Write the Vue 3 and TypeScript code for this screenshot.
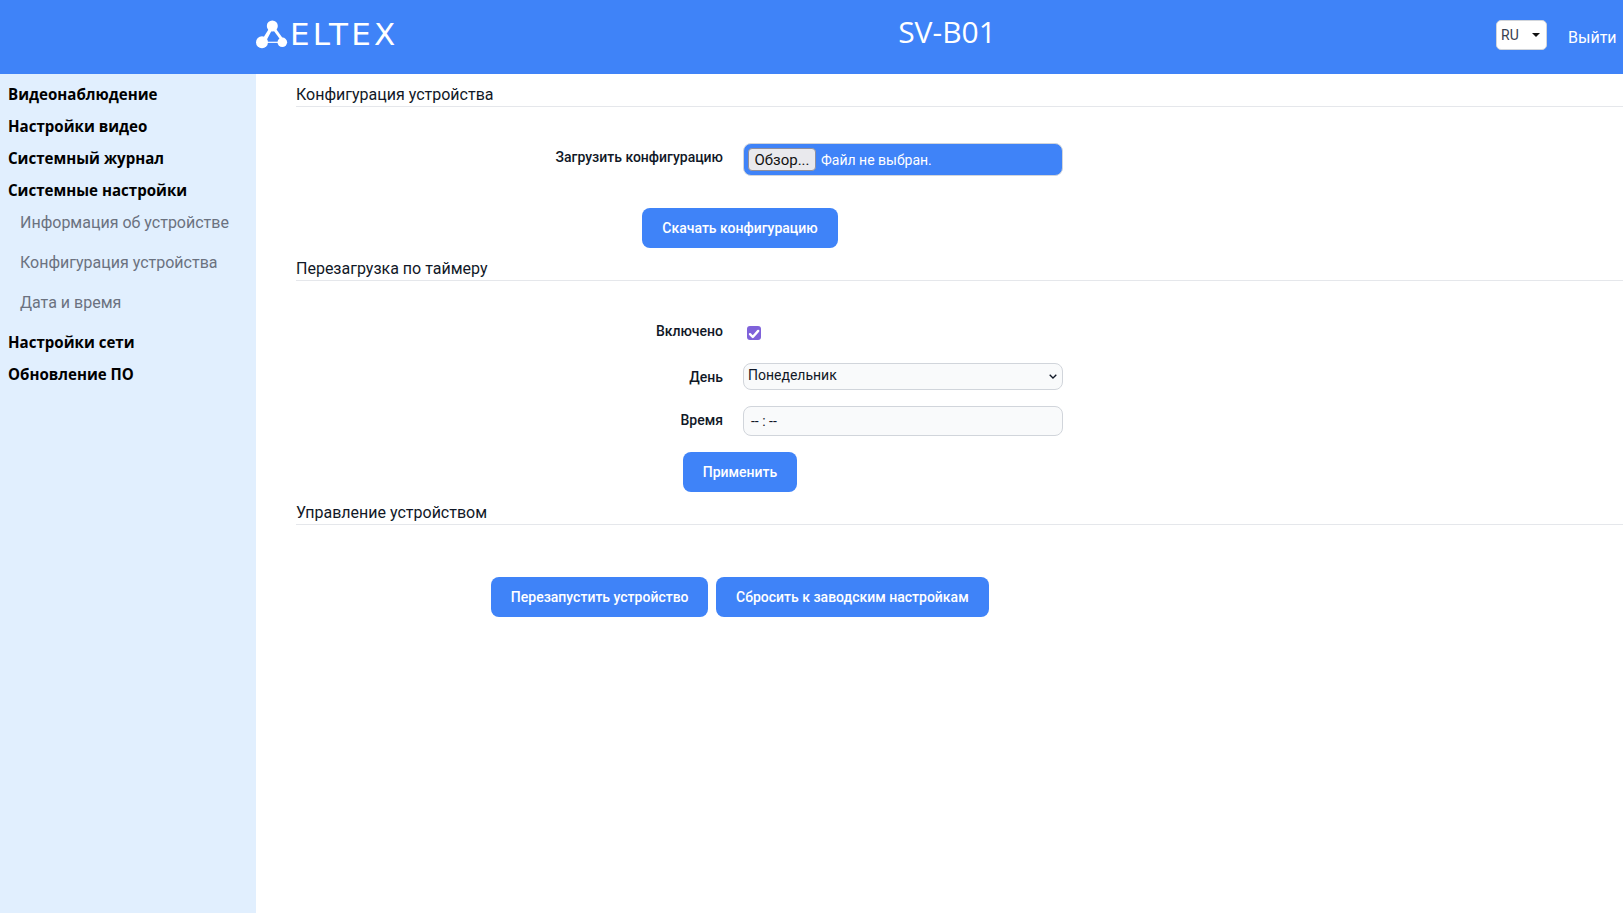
<script setup lang="ts">
const menuTop: string[] = ['Видеонаблюдение', 'Настройки видео', 'Системный журнал', 'Системные настройки']
const subItems: string[] = ['Информация об устройстве', 'Конфигурация устройства', 'Дата и время']
const menuBottom: string[] = ['Настройки сети', 'Обновление ПО']
</script>

<template>
  <div class="page">
    <header class="header">
      <div class="logo">
        <svg class="logo-mark" viewBox="0 0 34 30" width="34" height="30" aria-hidden="true">
          <path d="M14 8 L4 24 L8 26 L16 11 Z" fill="#fff" />
          <path d="M15 8 L26 23 L28 21 L18 7 Z" fill="#fff" />
          <path d="M6 23.3 H26" stroke="#fff" stroke-width="1.2" fill="none" />
          <circle cx="16.3" cy="7" r="5.5" fill="#fff" />
          <circle cx="6" cy="23.3" r="6" fill="#fff" />
          <circle cx="26.3" cy="23.3" r="4.8" fill="#fff" />
        </svg>
        <span class="logo-text">ELTEX</span>
      </div>
      <div class="title">SV-B01</div>
      <div class="header-right">
        <div class="lang"><span>RU</span><i class="caret"></i></div>
        <a class="logout">Выйти</a>
      </div>
    </header>
    <div class="body">
      <nav class="sidebar">
        <a v-for="m in menuTop" :key="m" class="nav-main">{{ m }}</a>
        <a v-for="s in subItems" :key="s" class="nav-sub">{{ s }}</a>
        <a v-for="m in menuBottom" :key="m" class="nav-main">{{ m }}</a>
      </nav>
      <main class="content">
        <section class="section">
          <h2 class="section-title">Конфигурация устройства</h2>
          <div class="form form-config">
            <div class="row row-file">
              <label class="label">Загрузить конфигурацию</label>
              <div class="file">
                <span class="file-btn">Обзор...</span>
                <span class="file-name">Файл не выбран.</span>
              </div>
            </div>
            <div class="actions actions-config"><button class="btn">Скачать конфигурацию</button></div>
          </div>
        </section>
        <section class="section">
          <h2 class="section-title">Перезагрузка по таймеру</h2>
          <div class="form form-timer">
            <div class="row row-check">
              <label class="label label-check">Включено</label>
              <div class="check-wrap">
                <span class="check">
                  <svg viewBox="0 0 14 14" width="14" height="14" aria-hidden="true">
                    <path d="M3 7.2 L5.8 10 L11.2 3.9" stroke="#fff" stroke-width="2.4" fill="none" stroke-linecap="round" stroke-linejoin="round" />
                  </svg>
                </span>
              </div>
            </div>
            <div class="row row-day">
              <label class="label label-day">День</label>
              <div class="select">
                <span class="select-value">Понедельник</span>
                <svg viewBox="0 0 8 5" width="8" height="5" aria-hidden="true">
                  <path d="M0.7 0.7 L4 4 L7.3 0.7" stroke="#111827" stroke-width="1.3" fill="none" />
                </svg>
              </div>
            </div>
            <div class="row row-time">
              <label class="label">Время</label>
              <div class="time">-- : --</div>
            </div>
            <div class="actions actions-timer"><button class="btn">Применить</button></div>
          </div>
        </section>
        <section class="section">
          <h2 class="section-title">Управление устройством</h2>
          <div class="form form-manage">
            <div class="actions actions-manage">
              <button class="btn btn-restart">Перезапустить устройство</button>
              <button class="btn">Сбросить к заводским настройкам</button>
            </div>
          </div>
        </section>
      </main>
    </div>
  </div>
</template>

<style>
html, body { margin: 0; padding: 0; background: #fff; }
</style>

<style scoped>
.page {
  width: 1623px;
  height: 913px;
  overflow: hidden;
  display: flex;
  flex-direction: column;
  font-family: Roboto, "Liberation Sans", sans-serif;
  color: #111827;
}
.header {
  height: 74px;
  flex: none;
  background: #3f83f8;
  display: flex;
  align-items: center;
  color: #fff;
  box-sizing: border-box;
  padding-left: 256px;
}
.logo {
  width: 561px;
  height: 68px;
  display: flex;
  align-items: center;
  gap: 0;
  align-self: flex-start;
}
.logo-mark { flex: none; }
.logo-text {
  font-family: "DejaVu Sans", sans-serif;
  font-size: 31px;
  letter-spacing: 3.2px;
  line-height: 1;
  font-weight: 400;
}
.title {
  width: 260px;
  text-align: center;
  font-family: "Open Sans", sans-serif;
  font-size: 30px;
  line-height: 64px;
  align-self: flex-start;
}
.header-right {
  margin-left: 419px;
  display: flex;
  align-items: center;
  gap: 21px;
}
.lang {
  width: 51px;
  height: 30px;
  margin-top: -4px;
  box-sizing: border-box;
  background: #fff;
  border: 1px solid #d1d5db;
  border-radius: 5px;
  display: flex;
  align-items: center;
  justify-content: space-between;
  padding: 0 6px 0 4px;
  color: #374151;
  font-size: 14px;
}
.caret {
  width: 0;
  height: 0;
  border-left: 4.5px solid transparent;
  border-right: 4.5px solid transparent;
  border-top: 4.5px solid #111;
}
.logout {
  font-size: 16px;
  color: #fff;
}
.body { flex: 1; display: flex; min-height: 0; }
.sidebar {
  width: 256px;
  flex: none;
  background: #e1effe;
  display: flex;
  flex-direction: column;
  padding-top: 4px;
  box-sizing: border-box;
}
.nav-main {
  height: 32px;
  line-height: 32px;
  padding-left: 8px;
  font-family: "Open Sans", sans-serif;
  font-weight: 700;
  font-size: 15.1px;
  color: #000;
}
.nav-sub {
  height: 40px;
  line-height: 34px;
  padding-left: 20px;
  font-size: 16px;
  color: #6b7280;
}
.content {
  flex: 1;
  min-width: 0;
  padding-left: 40px;
  display: flex;
  flex-direction: column;
}
.section-title {
  margin: 0;
  height: 33px;
  line-height: 42px;
  box-sizing: border-box;
  font-size: 16px;
  font-weight: 400;
  color: #111827;
  border-bottom: 1px solid #e5e7eb;
}
.form { width: 888px; display: flex; flex-direction: column; }
.form-config { height: 141px; padding-top: 36px; box-sizing: border-box; }
.form-timer { height: 211px; padding-top: 40px; box-sizing: border-box; }
.form-manage { padding-top: 52px; }
.row { display: flex; align-items: flex-start; gap: 20px; }
.label {
  width: 427px;
  flex: none;
  text-align: right;
  font-size: 14px;
  font-weight: 500;
  line-height: 20px;
  color: #111827;
}
.row-file { height: 65px; }
.row-file .label { padding-top: 4px; }
.file {
  width: 320px;
  height: 33px;
  box-sizing: border-box;
  background: #3f83f8;
  border: 1px solid #d1d5db;
  border-radius: 8px;
  display: flex;
  align-items: center;
  padding-left: 4px;
  gap: 5px;
  color: #fff;
  font-size: 14px;
}
.file-btn {
  width: 68px;
  height: 23px;
  box-sizing: border-box;
  background: #e9e9ed;
  border: 1px solid #8f8f9d;
  border-radius: 4px;
  color: #111;
  text-align: center;
  line-height: 23px;
  font-size: 15px;
}
.actions { display: flex; justify-content: center; gap: 8px; }
.btn {
  height: 40px;
  padding: 0 20px;
  border: 0;
  border-radius: 8px;
  background: #3f83f8;
  color: #fff;
  font-family: Roboto, sans-serif;
  font-size: 14px;
  font-weight: 500;
}
.btn-restart { padding: 0 19.5px; }
.row-check { height: 41px; }
.check-wrap { padding: 5px 0 0 4px; }
.check {
  width: 14px;
  height: 14px;
  display: block;
  background: #7f62da;
  border-radius: 3px;
}
.row-day { height: 43px; }
.row-day .label { padding-top: 5px; }
.select {
  width: 320px;
  height: 27px;
  margin-top: 1px;
  box-sizing: border-box;
  background: #f9fafb;
  border: 1px solid #d1d5db;
  border-radius: 8px;
  display: flex;
  align-items: center;
  justify-content: space-between;
  padding: 0 5px 0 4px;
  font-size: 14px;
  color: #111827;
}
.select-value { line-height: 23px; margin-bottom: 2px; }
.row-time { height: 47px; }
.row-time .label { padding-top: 5px; }
.time {
  width: 320px;
  height: 30px;
  margin-top: 1px;
  box-sizing: border-box;
  background: #f9fafb;
  border: 1px solid #d1d5db;
  border-radius: 8px;
  padding: 0 7px;
  line-height: 28px;
  font-size: 14px;
  color: #111827;
}
</style>
